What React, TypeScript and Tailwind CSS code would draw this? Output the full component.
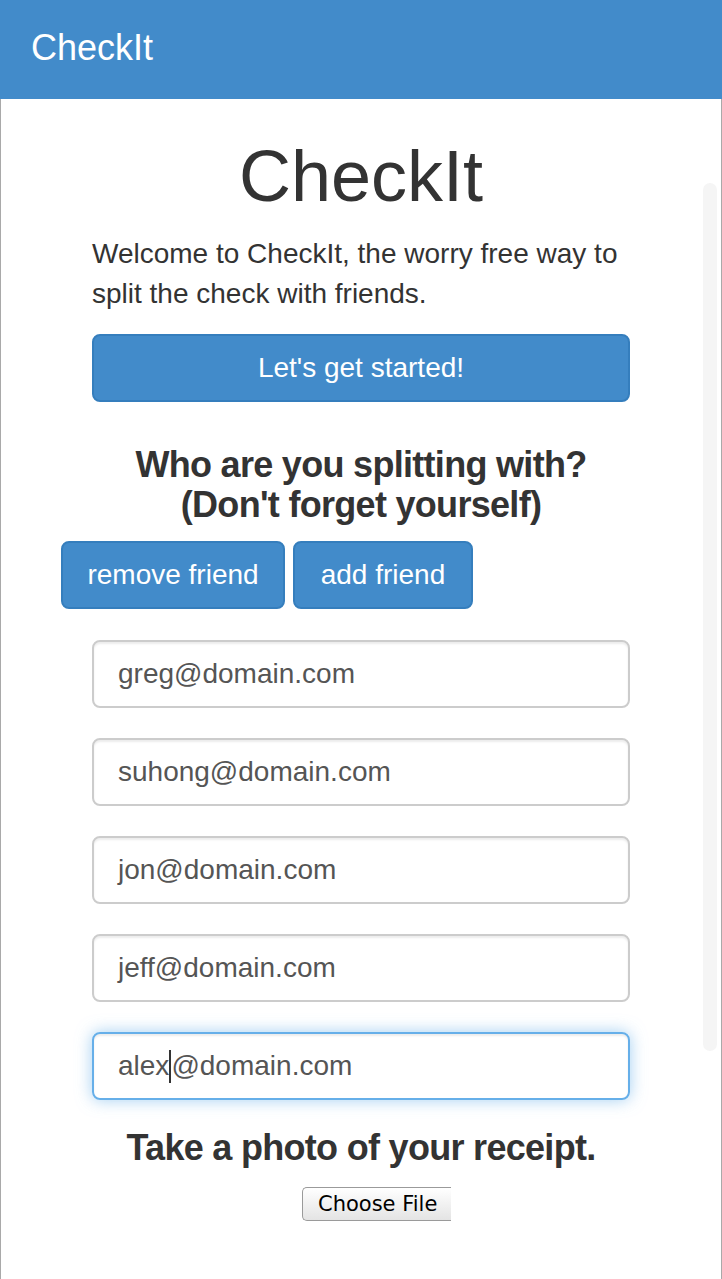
export default function App() {
  const emails = [
    "greg@domain.com",
    "suhong@domain.com",
    "jon@domain.com",
    "jeff@domain.com",
  ];
  return (
    <div className="relative flex min-h-[1279px] w-[722px] flex-col bg-white font-['Liberation_Sans',Arial,sans-serif] text-[#333]">
      <header className="h-[99px] shrink-0 bg-[#428bca] pl-[31px] pt-[28px] text-[36px] leading-[40px] text-white">
        CheckIt
      </header>
      <main className="flex-1 border-x border-[#a9a9a9] pb-[40px]">
        <div className="mx-auto w-[538px]">
          <h1 className="mt-[38px] text-center text-[72px] font-normal leading-[79px]">
            CheckIt
          </h1>
          <p className="mt-[18px] text-[28px] leading-[40px]">
            Welcome to CheckIt, the worry free way to split the check with friends.
          </p>
          <button className="mt-[20px] h-[68px] w-full rounded-[8px] border-2 border-[#357ebd] bg-[#428bca] text-[28px] leading-[40px] text-white">
            Let's get started!
          </button>
          <h4 className="mt-[43px] text-center text-[36px] font-bold leading-[40px] tracking-[-0.7px]">
            Who are you splitting with?
            <br />
            (Don't forget yourself)
          </h4>
          <div className="-ml-[31px] mt-[16px] flex gap-[8px]">
            <button className="h-[68px] w-[224px] rounded-[8px] border-2 border-[#357ebd] bg-[#428bca] text-[28px] leading-[40px] text-white">
              remove friend
            </button>
            <button className="h-[68px] w-[180px] rounded-[8px] border-2 border-[#357ebd] bg-[#428bca] text-[28px] leading-[40px] text-white">
              add friend
            </button>
          </div>
          <div className="mt-[31px] flex flex-col gap-[30px]">
            {emails.map((e) => (
              <div
                key={e}
                className="flex h-[68px] items-center rounded-[8px] border-2 border-[#ccc] px-[24px] text-[28px] leading-[40px] text-[#555] shadow-[inset_0_2px_2px_rgba(0,0,0,0.075)]"
              >
                {e}
              </div>
            ))}
            <div className="flex h-[68px] items-center rounded-[8px] border-2 border-[#66afe9] px-[24px] text-[28px] leading-[40px] text-[#555] shadow-[inset_0_2px_2px_rgba(0,0,0,0.075),0_0_16px_rgba(102,175,233,0.6)]">
              <span>alex</span>
              <span className="h-[33px] w-[2px] bg-[#333]" />
              <span>@domain.com</span>
            </div>
          </div>
          <h4 className="mt-[28px] text-center text-[36px] font-bold leading-[40px] tracking-[-0.7px]">
            Take a photo of your receipt.
          </h4>
          <div className="ml-[210px] mt-[19px] flex">
            <div className="flex h-[34px] w-[149px] items-center rounded-l-[5px] border-y border-l border-[#9a9a9a] bg-gradient-to-b from-white to-[#e4e4e4] pl-[15px] font-['DejaVu_Sans',sans-serif] text-[21px] leading-[24px] text-black">
              Choose File
            </div>
          </div>
        </div>
      </main>
      <div className="absolute left-[703px] top-[183px] h-[868px] w-[14px] rounded-full bg-[#f5f5f5]" />
    </div>
  );
}
